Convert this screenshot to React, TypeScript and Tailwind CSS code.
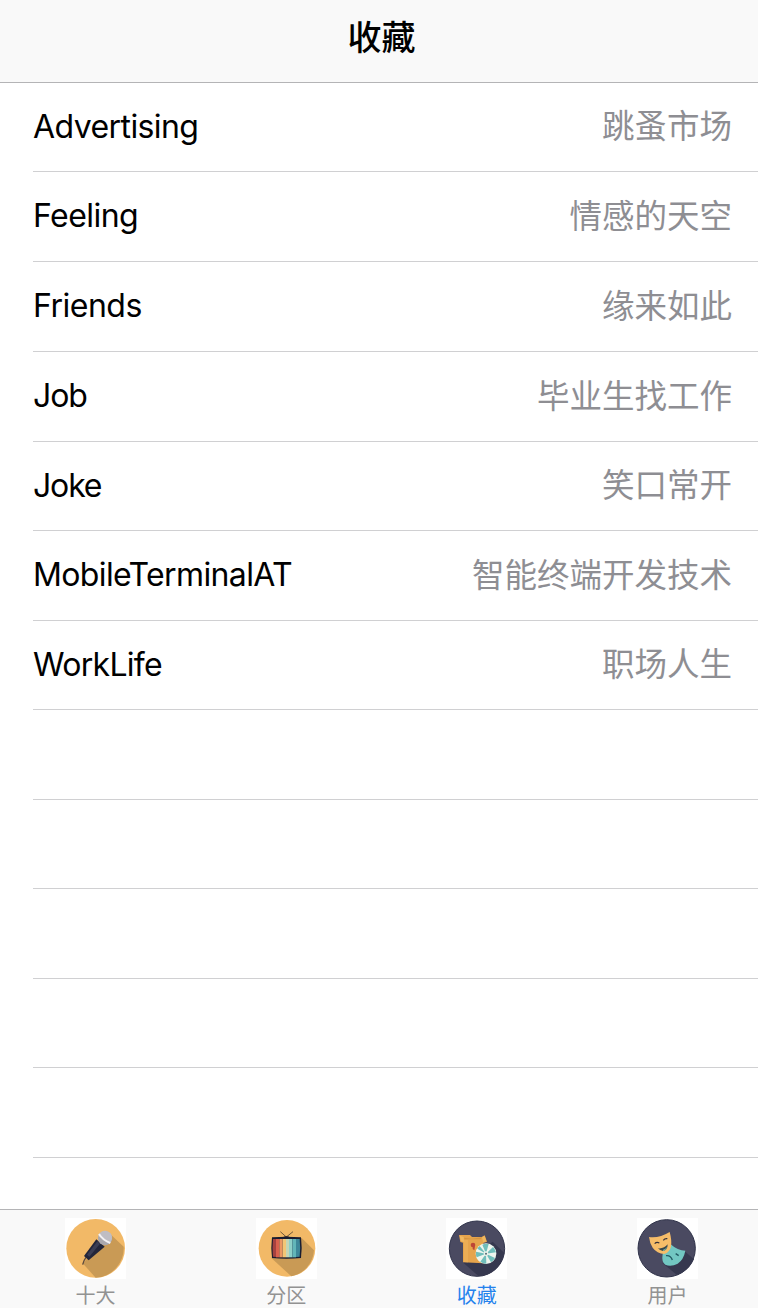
import type { ReactNode } from "react";

const boards = [
  { name: "Advertising", title: "跳蚤市场", size: "h-[89px]", tracking: "tracking-[-0.58px]" },
  { name: "Feeling", title: "情感的天空", size: "h-[90px]", tracking: "tracking-[-0.55px]" },
  { name: "Friends", title: "缘来如此", size: "h-[90px]", tracking: "tracking-[-0.5px]" },
  { name: "Job", title: "毕业生找工作", size: "h-[90px]", tracking: "tracking-[-1.1px]" },
  { name: "Joke", title: "笑口常开", size: "h-[89px]", tracking: "tracking-[-1.15px]" },
  { name: "MobileTerminalAT", title: "智能终端开发技术", size: "h-[90px]", tracking: "tracking-[-0.63px]" },
  { name: "WorkLife", title: "职场人生", size: "h-[89px]", tracking: "tracking-[-0.7px]" },
  { name: "", title: "", size: "h-[90px]", tracking: "" },
  { name: "", title: "", size: "h-[89px]", tracking: "" },
  { name: "", title: "", size: "h-[90px]", tracking: "" },
  { name: "", title: "", size: "h-[89px]", tracking: "" },
  { name: "", title: "", size: "h-[90px]", tracking: "" },
];

function MicIcon() {
  return (
    <svg viewBox="27 40 183 183" className="size-[61px] bg-white">
      <circle cx="119" cy="131" r="88" fill="#f2b967" />
      <path d="M80 176 L165 90 L203 126 A88 88 0 0 1 119 219 Z" fill="#c99a55" />
      <path d="M90 158 Q84 165 80 180" fill="none" stroke="#5c4a3e" strokeWidth="4" />
      <path d="M84 154 L121 104 L146 126 L98 167 Z" fill="#22253a" />
      <path d="M93 150 L124 110 L132 117 L100 156 Z" fill="#3a3d54" />
      <circle cx="147" cy="101" r="21" fill="#aaa8ae" />
      <path d="M127 94 A21 21 0 0 1 168 103 L164 113 Q142 104 127 94 Z" fill="#bfbdc3" />
      <path d="M129 88 Q140 106 163 115" fill="none" stroke="#f4f2f3" strokeWidth="6" />
    </svg>
  );
}

function TvIcon() {
  return (
    <svg viewBox="31 40 183 183" className="size-[61px] bg-white">
      <circle cx="124" cy="131" r="85" fill="#f2b967" />
      <path d="M77 160 L168 100 L205 137 A85 85 0 0 1 137 215 Z" fill="#c99a55" />
      <path d="M104 81 L122 97 L142 81" fill="none" stroke="#70583b" strokeWidth="3" />
      <path d="M109 100 Q122 88 136 100" fill="#3d3432" />
      <path d="M79 98 Q122 94 166 98 Q170 129 166 160 Q122 165 79 160 Q75 129 79 98 Z" fill="#191c30" />
      <path d="M82 103 H92 V157 L82 156 Q79 129 82 103 Z" fill="#a6413f" />
      <path d="M91 103 H101 V158 H91 Z" fill="#d9604d" />
      <path d="M101 103 H111 V158 H101 Z" fill="#ec9661" />
      <path d="M111 103 H121 V158 H111 Z" fill="#f3c675" />
      <path d="M121 103 H130 V158 H121 Z" fill="#c4d5b5" />
      <path d="M130 103 H140 V158 H130 Z" fill="#8fd0c8" />
      <path d="M140 103 H151 V158 H140 Z" fill="#62b6b9" />
      <path d="M151 103 H162 Q165 129 162 156 L151 157 Z" fill="#3d8799" />
    </svg>
  );
}

function BoxIcon() {
  return (
    <svg viewBox="30 40 183 183" className="size-[61px] bg-white">
      <circle cx="123" cy="132" r="83" fill="#4a4a61" stroke="#32354c" strokeWidth="3" />
      <path d="M82 174 L170 111 L205 145 A83 83 0 0 1 128 215 Z" fill="#36384f" />
      <path d="M69 91 L102 91 L108 97 L137 97 L146 92 L153 111 L142 115 V176 L81 173 V114 L73 112 Z" fill="#e6a44c" />
      <path d="M84 99 L107 102 L138 98 L134 104 L86 104 Z" fill="#d39440" />
      <path d="M71 93 L83 97 L84 112 L75 110 Z" fill="#f0b962" />
      <path d="M138 98 L146 94 L151 110 L141 113 Z" fill="#efb75f" />
      <path d="M84 106 H96 V173 L84 172 Z" fill="#ecae55" />
      <ellipse cx="111" cy="121" rx="7" ry="7" fill="#be4535" />
      <path d="M110 125 L117 125 L115 137 L110 133 Z" fill="#be4535" />
      <circle cx="150" cy="147" r="31" fill="#eef5ee" />
      <path d="M150 147 L139 120 A30 30 0 0 1 158 118 Z M150 147 L171 127 A30 30 0 0 1 180 143 Z M150 147 L177 160 A30 30 0 0 1 165 173 Z M150 147 L151 177 A30 30 0 0 1 133 171 Z M150 147 L122 158 A30 30 0 0 1 120 141 Z M150 147 L124 132 A30 30 0 0 1 131 124 Z" fill="#70bebb" />
      <circle cx="150" cy="147" r="7" fill="#e9f3eb" />
      <circle cx="150" cy="147" r="3" fill="#526c75" />
    </svg>
  );
}

function MasksIcon() {
  return (
    <svg viewBox="31 40 183 183" className="size-[61px] bg-white">
      <circle cx="120" cy="131" r="86" fill="#4a4a61" stroke="#30334a" strokeWidth="3" />
      <path d="M107 175 L173 139 L202 164 A86 86 0 0 1 151 211 Z" fill="#36384f" />
      <path d="M132 119 Q153 138 176 138 Q171 165 153 177 Q133 187 116 180 Q104 173 108 147 Z" fill="#72c7c2" />
      <path d="M118 153 Q132 151 137 166" fill="none" stroke="#235a63" strokeWidth="4" />
      <path d="M147 147 L156 153" fill="none" stroke="#235a63" strokeWidth="4" />
      <path d="M67 97 Q98 101 129 82 Q136 107 133 126 Q129 142 113 148 Q91 147 78 129 Q69 115 67 97 Z" fill="#f6bd69" />
      <path d="M84 117 Q90 111 98 115 M110 107 Q114 101 122 102" fill="none" stroke="#332f38" strokeWidth="3.5" />
      <path d="M94 131 Q112 133 123 119 Q123 137 109 139 Q99 138 94 131 Z" fill="#39464b" />
      <path d="M108 136 Q117 134 121 126 Q120 135 111 139 Z" fill="#79c7bb" />
    </svg>
  );
}

const tabs: { label: string; icon: ReactNode; color: string }[] = [
  { label: "十大", icon: <MicIcon />, color: "text-[#929292]" },
  { label: "分区", icon: <TvIcon />, color: "text-[#929292]" },
  { label: "收藏", icon: <BoxIcon />, color: "text-[#2582ed]" },
  { label: "用户", icon: <MasksIcon />, color: "text-[#929292]" },
];

export default function App() {
  return (
    <div className="flex h-[1308px] w-[758px] flex-col bg-white font-['Inter','Noto_Sans_CJK_SC',sans-serif]">
      <header className="flex h-[83px] shrink-0 items-center justify-center border-b border-[#b4b4b6] bg-[#f9f9f9] pb-[11px] pl-[5px]">
        <h1 className="font-['Noto_Sans_CJK_SC',sans-serif] text-[34px] leading-none font-medium text-black">收藏</h1>
      </header>
      <main className="flex-1">
        <ul className="pl-[33px]">
          {boards.map((board, index) => (
            <li key={index} className={`flex items-center justify-between border-b border-[#d0d0d2] pr-[26px] ${board.size}`}>
              <span className={`pb-px text-[32px] leading-none font-normal text-black ${board.tracking}`}>{board.name}</span>
              <span className="pb-[5px] font-['Noto_Sans_CJK_SC',sans-serif] text-[32.5px] leading-none text-[#8e8e93]">{board.title}</span>
            </li>
          ))}
        </ul>
      </main>
      <nav className="flex h-[99px] shrink-0 justify-between border-t border-[#b4b4b6] bg-[#f9f9f9] pt-2 pr-[60px] pl-[65px]">
        {tabs.map((tab) => (
          <div key={tab.label} className="flex flex-col items-center">
            {tab.icon}
            <span className={`mt-[6px] font-['Noto_Sans_CJK_SC',sans-serif] text-[20px] leading-[20px] ${tab.color}`}>{tab.label}</span>
          </div>
        ))}
      </nav>
    </div>
  );
}
